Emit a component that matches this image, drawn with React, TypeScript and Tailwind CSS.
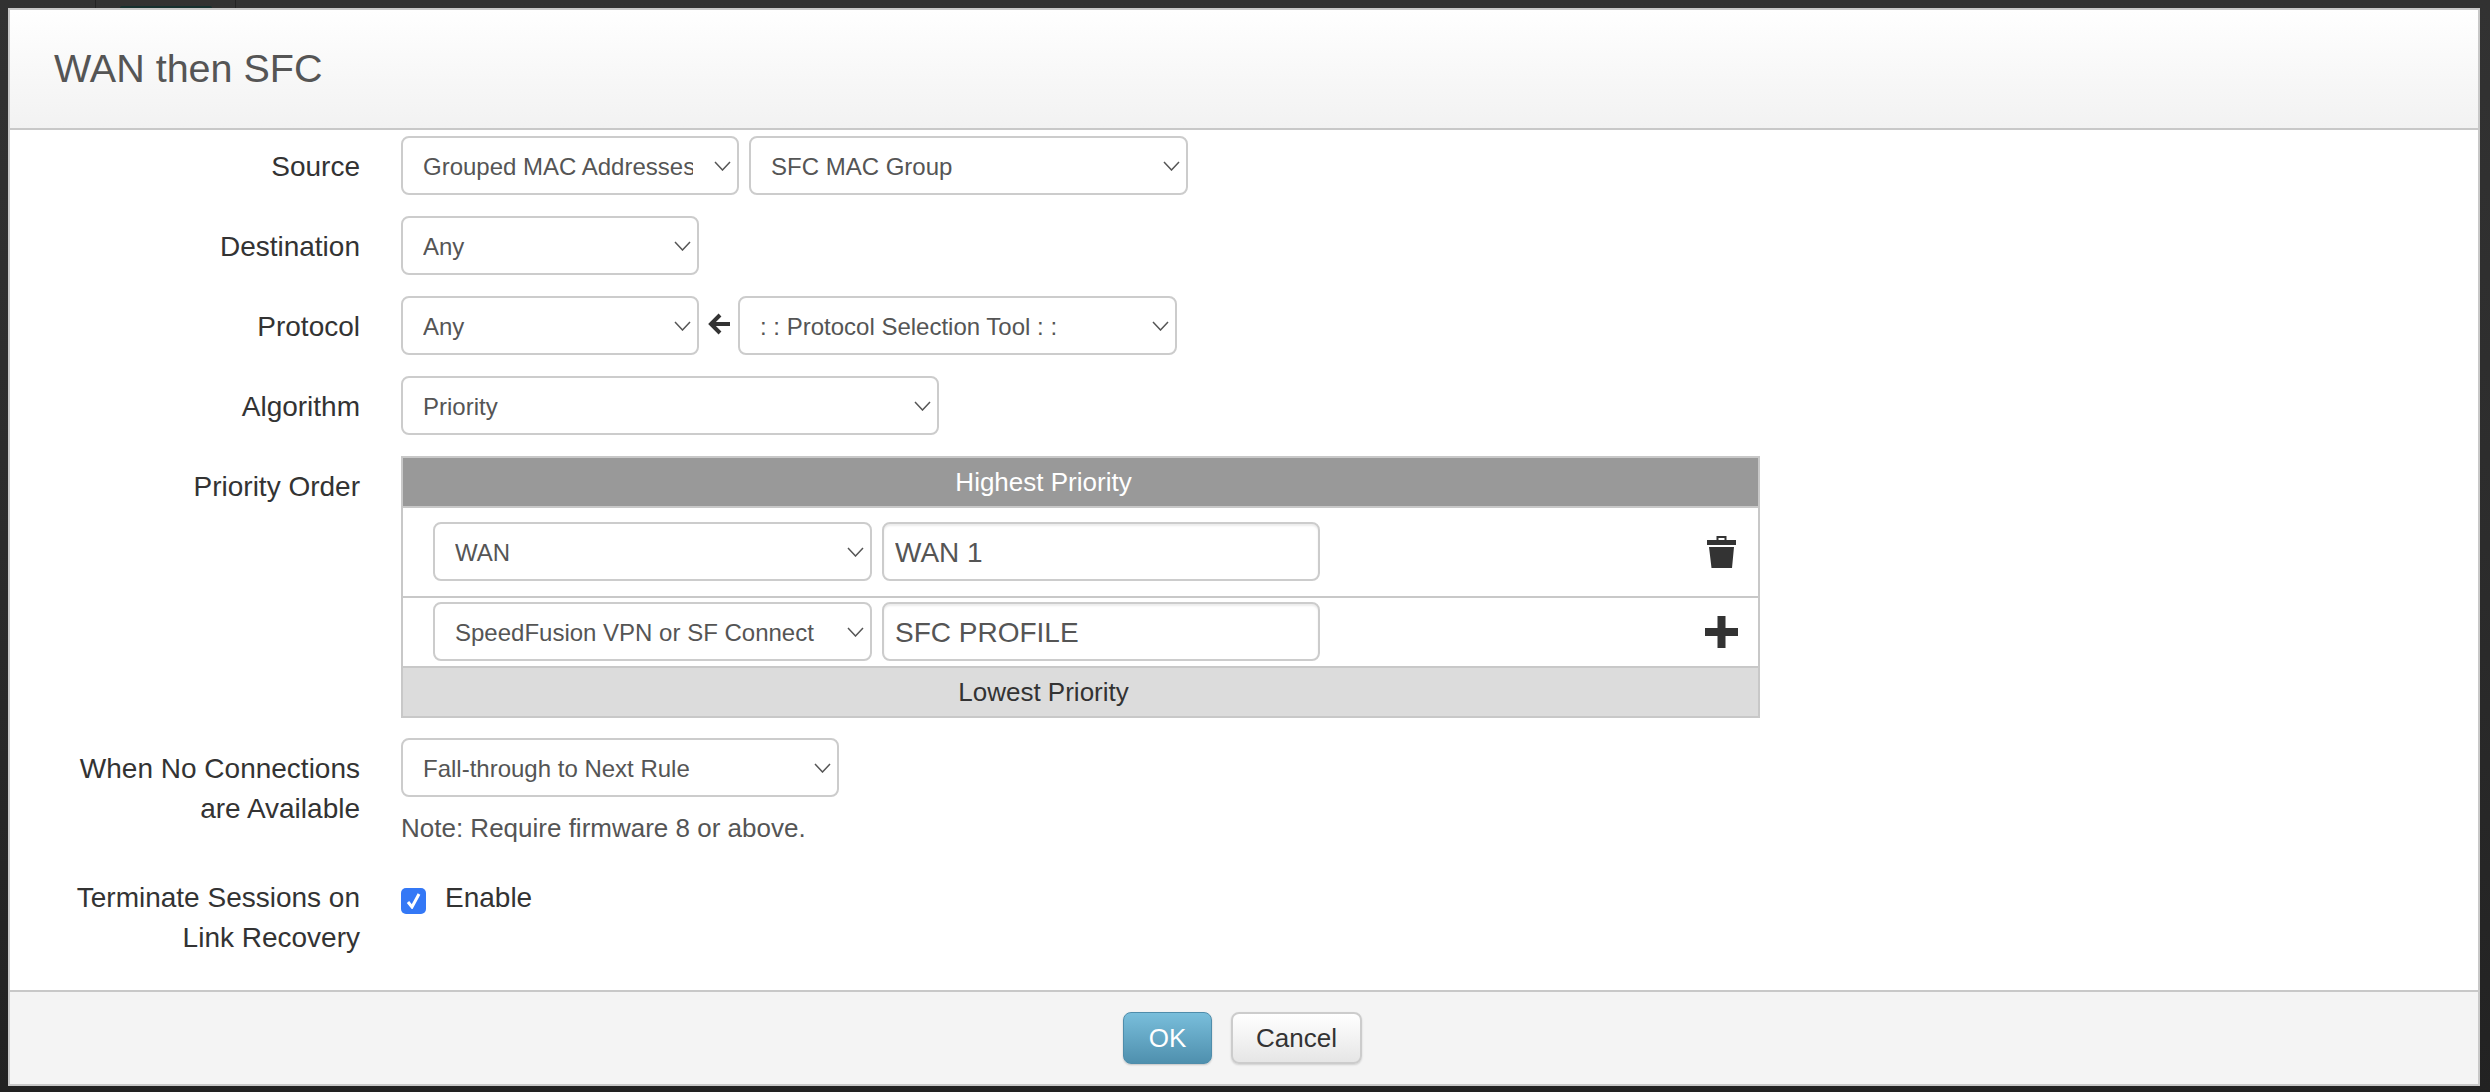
import type { ReactNode } from 'react';

function Chevron() {
    return (
        <svg className="absolute right-[8px] top-1/2 -translate-y-1/2 pointer-events-none" width="17" height="10" viewBox="0 0 17 10" fill="none" stroke="#555" strokeWidth="1.5">
            <path d="M1 1l7.5 8L16 1" />
        </svg>
    );
}

function Select({ value, className }: { value: string; className: string }) {
    return (
        <div className={`relative shrink-0 ${className}`}>
            <select
                defaultValue={value}
                className="block w-full h-[59px] appearance-none bg-white border-2 border-[#ccc] rounded-[8px] pl-[20px] pr-[44px] pt-[2px] text-[24px] text-[#555] outline-none"
            >
                <option>{value}</option>
            </select>
            <Chevron />
        </div>
    );
}

function Row({ label, children, className = 'mb-[21px]' }: { label: ReactNode; children: ReactNode; className?: string }) {
    return (
        <div className={`flex ${className}`}>
            <div className="w-[350px] shrink-0 pt-[11px] text-right text-[28px] leading-[40px] text-[#333]">{label}</div>
            <div className="ml-[41px] flex-1">{children}</div>
        </div>
    );
}

function TextInput({ value }: { value: string }) {
    return (
        <input
            defaultValue={value}
            className="ml-[10px] w-[438px] h-[59px] bg-white border-2 border-[#ccc] rounded-[8px] pl-[11px] pt-[2px] text-[28px] text-[#555] shadow-[inset_0_2px_2px_rgba(0,0,0,0.08)] outline-none"
        />
    );
}

export default function App() {
    return (
        <div className="relative w-[2490px] h-[1092px] bg-gradient-to-b from-[#323232] via-[#2c2c2c] to-[#222] p-[8px] pr-[10px] pb-[6px] font-['Liberation_Sans',sans-serif] overflow-hidden">
            {/* bits of the page behind the dialog */}
            <div className="absolute left-[95px] top-0 w-px h-[8px] bg-[#222]" />
            <div className="absolute left-[235px] top-0 w-px h-[8px] bg-[#222]" />
            <div className="absolute left-[120px] top-[6px] w-[92px] h-[2px] rounded-t-[3px] bg-[#16302f]" />

            <div className="relative h-full flex flex-col border-2 border-[#c8c8c8] bg-white">
                <div className="h-[120px] shrink-0 flex items-center pl-[44px] pb-px border-b-2 border-[#c8c8c8] bg-gradient-to-b from-white to-[#f2f2f2]">
                    <h1 className="text-[39.5px] text-[#555]">WAN then SFC</h1>
                </div>

                <div className="flex-1 pt-[6px]">
                    <Row label="Source">
                        <div className="flex">
                            <Select value="Grouped MAC Addresses" className="w-[338px]" />
                            <Select value="SFC MAC Group" className="ml-[10px] w-[439px]" />
                        </div>
                    </Row>
                    <Row label="Destination">
                        <Select value="Any" className="w-[298px]" />
                    </Row>
                    <Row label="Protocol">
                        <div className="flex items-center">
                            <Select value="Any" className="w-[298px]" />
                            <svg className="ml-[9px] mr-[8px] -mt-[4px]" width="22" height="22" viewBox="0 0 22 22" fill="none" stroke="#333" strokeWidth="4">
                                <path d="M22 11H4M12 2l-9 9 9 9" />
                            </svg>
                            <Select value=": : Protocol Selection Tool : :" className="w-[439px]" />
                        </div>
                    </Row>
                    <Row label="Algorithm">
                        <Select value="Priority" className="w-[538px]" />
                    </Row>

                    <Row label="Priority Order" className="mb-[20px]">
                        <div className="w-[1359px] border-2 border-[#c8c8c8] text-[26px]">
                            <div className="h-[50px] flex items-center justify-center pr-[74px] border-b-2 border-[#c8c8c8] bg-[#999] text-white">Highest Priority</div>
                            <div className="h-[90px] flex items-center pl-[30px] pr-[22px] pb-px border-b-2 border-[#c8c8c8]">
                                <Select value="WAN" className="w-[439px]" />
                                <TextInput value="WAN 1" />
                                <svg className="ml-auto" width="29" height="32" viewBox="0 0 29 32" fill="#333">
                                    <path d="M9.5 5V0h10v5h-2V2h-6v3zM0 4h29v5H0zM2 11h25l-2 21H4.5z" />
                                </svg>
                            </div>
                            <div className="h-[70px] flex items-center pl-[30px] pr-[20px] pb-px border-b-2 border-[#c8c8c8]">
                                <Select value="SpeedFusion VPN or SF Connect" className="w-[439px]" />
                                <TextInput value="SFC PROFILE" />
                                <svg className="ml-auto" width="33" height="32" viewBox="0 0 33 32" fill="#333">
                                    <path d="M12.5 0h8v12H33v8H20.500v12h-8V20H0v-8h12.500z" />
                                </svg>
                            </div>
                            <div className="h-[48px] flex items-center justify-center pr-[74px] bg-[#dcdcdc] text-[#333]">Lowest Priority</div>
                        </div>
                    </Row>

                    <Row label={<>When No Connections<br />are Available</>} className="mb-[19px]">
                        <Select value="Fall-through to Next Rule" className="w-[438px]" />
                        <p className="mt-[11px] text-[26px] leading-[40px] text-[#555]">Note: Require firmware 8 or above.</p>
                    </Row>

                    <Row label={<>Terminate Sessions on<br />Link Recovery</>} className="">
                        <label className="flex items-center h-[40px] mt-[11px] text-[28px] text-[#333]">
                            <span className="relative w-[25px] h-[26px] mt-[6px] shrink-0">
                                <input type="checkbox" defaultChecked className="block w-full h-full appearance-none rounded-[5px] bg-[#3478f6]" />
                                <svg className="absolute left-[5px] top-[5px]" width="15" height="16" viewBox="0 0 15 16" fill="none" stroke="#fff" strokeWidth="3">
                                    <path d="M2 9l4 5 7-13" />
                                </svg>
                            </span>
                            <span className="ml-[19px]">Enable</span>
                        </label>
                    </Row>
                </div>

                <div className="h-[94px] shrink-0 flex justify-center gap-[19px] pt-[20px] pr-[3px] border-t-2 border-[#c8c8c8] bg-[#f4f4f4] text-[26px]">
                    <button className="w-[89px] h-[52px] rounded-[8px] border border-[#4f8dab] bg-gradient-to-b from-[#79bedb] to-[#4f90ae] text-white shadow-[0_1px_2px_rgba(0,0,0,0.2)]">OK</button>
                    <button className="w-[131px] h-[52px] rounded-[8px] border-2 border-[#ccc] bg-gradient-to-b from-white to-[#e6e6e6] text-[#333] shadow-[0_1px_2px_rgba(0,0,0,0.15)]">Cancel</button>
                </div>
            </div>
        </div>
    );
}
